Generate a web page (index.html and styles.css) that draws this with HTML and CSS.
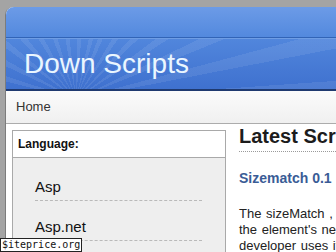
FILE: index.html
```html
<!DOCTYPE html>
<html lang="en">
<head>
    <meta charset="UTF-8">
    <meta name="viewport" content="width=device-width, initial-scale=1.0">
    <title>Down Scripts</title>
    <link rel="stylesheet" href="styles.css">
</head>
<body>
    <div class="page">
        <div class="header">
            <div class="header-top"></div>
            <div class="header-main">
                <h1 class="logo">Down Scripts</h1>
            </div>
        </div>
        <div class="nav">
            <a href="#">Home</a>
        </div>
        <div class="content">
            <div class="sidebar">
                <div class="box-title">Language:</div>
                <ul class="lang-list">
                    <li><a href="#">Asp</a></li>
                    <li><a href="#">Asp.net</a></li>
                    <li><a href="#">C/C++</a></li>
                </ul>
            </div>
            <div class="main">
                <h2>Latest Scripts</h2>
                <h3>Sizematch 0.1</h3>
                <p>The sizeMatch , plugin sets the size of an element to match<br>
                the element's nearest parent or sibling, so that every time a<br>
                developer uses it the layout stays in line.</p>
            </div>
        </div>
    </div>
    <div class="watermark">$iteprice.org</div>
</body>
</html>
```

FILE: styles.css
```css
html, body { margin: 0; padding: 0; }
body { background: #a4a4a4; font-family: "Liberation Sans", Arial, sans-serif; overflow: hidden; width: 336px; height: 252px; }

.page { margin: 7px 0 0 5px; width: 800px; background: #fff; border-left: 1px solid #7c7c7c; border-radius: 8px 0 0 0; }

/* Header */
.header { border-radius: 8px 0 0 0; overflow: hidden; }
.header-top { height: 30px; background: linear-gradient(#6c9be7, #5389de); border-bottom: 1px solid #3264b6; }
.header-main {
    height: 50px;
    background:
        repeating-conic-gradient(from 20deg at 70px 120%, rgba(255,255,255,0.08) 0deg 4deg, rgba(255,255,255,0) 4deg 11deg),
        linear-gradient(#5186dc, #3f71cf);
    border-top: 1px solid #6f9de4;
    border-bottom: 2px solid #1f3a70;
}
.logo { margin: 0; padding: 9px 0 0 18px; font-weight: normal; font-size: 28px; line-height: 32px; color: #eaf6ff; }

/* Navigation */
.nav { height: 32px; background: linear-gradient(#fbfbfb, #f0f0f0); border-bottom: 1px solid #acacac; }
.nav a { display: inline-block; padding: 0 0 0 10px; line-height: 32px; font-size: 13px; color: #333; text-decoration: none; }

/* Content */
.content { display: flex; gap: 13px; padding: 0 0 0 6px; }

.sidebar { width: 212px; margin-top: 6px; border: 1px solid #a9a9a9; flex: none; }
.box-title { height: 26px; line-height: 26px; padding-left: 5px; font-size: 12px; font-weight: bold; color: #111; background: #fff; border-bottom: 1px solid #a9a9a9; }
.lang-list { list-style: none; margin: 0; padding: 3px 0 10px; background: #eeeeee; }
.lang-list li { margin: 0 23px 0 22px; padding: 17px 0 4px; border-bottom: 1px dashed #b9b9b9; }
.lang-list a { display: block; font-size: 15px; line-height: 18px; color: #111; text-decoration: none; }

.main { flex: 1; }
.main h2 { margin: 0; padding: 1px 0 4px; font-size: 20px; line-height: 22px; color: #1c1c1c; border-bottom: 1px dotted #9a9a9a; }
.main h3 { margin: 18px 0 19px; font-size: 14px; line-height: 17px; color: #3a5c96; }
.main p { margin: 0; font-size: 13px; line-height: 16px; color: #222; word-spacing: 1px; }

/* Overlay badge */
.watermark { position: absolute; left: 0; top: 238px; padding: 0 1px; background: #fff; border: 1px solid #222; font-family: "DejaVu Sans Mono", monospace; font-size: 10px; line-height: 12px; color: #111; }
```
